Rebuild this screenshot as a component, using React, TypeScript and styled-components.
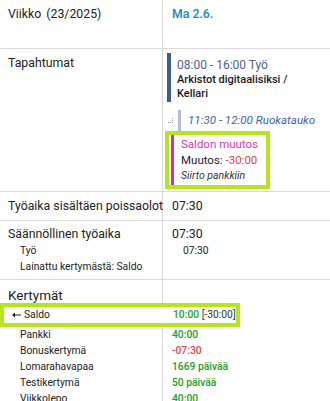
import styled, { createGlobalStyle } from "styled-components";

const GlobalStyle = createGlobalStyle`
  html, body {
    margin: 0;
    padding: 0;
    background: #fff;
    overflow: hidden;
  }
  body {
    font-family: Roboto, "Liberation Sans", sans-serif;
    font-size: 12.3px;
    color: #222;
  }
`;

const Table = styled.div`
  width: 330px;
  white-space: nowrap;
`;

const Row = styled.div<{ $h?: number }>`
  display: grid;
  grid-template-columns: 163px 1fr;
  border-bottom: 1px solid #d9d9d9;
  min-height: ${p => (p.$h ? `${p.$h}px` : "auto")};
`;

const LeftCell = styled.div<{ $pt?: number; $pb?: number }>`
  border-right: 1px solid #d9d9d9;
  padding: ${p => p.$pt ?? 6}px 0 ${p => p.$pb ?? 4}px 8px;
  line-height: 17px;
`;

const RightCell = styled.div<{ $pt?: number; $pl?: number }>`
  padding: ${p => p.$pt ?? 6}px 4px 0 ${p => p.$pl ?? 9}px;
  line-height: 17px;
`;

const WeekNo = styled.span`
  margin-left: 5px;
`;

const DayTitle = styled.span`
  color: #1a86c6;
  font-weight: 500;
`;

const Sub = styled.div<{ $indent?: number }>`
  font-size: 10.3px;
  line-height: 16px;
  padding-left: ${p => p.$indent ?? 12}px;
`;

const Events = styled.div`
  display: flex;
  flex-direction: column;
  align-items: flex-start;
  padding-top: 4px;
`;

const EventBox = styled.div<{ $bar: string }>`
  border-left: 4px solid ${p => p.$bar};
  padding: 4px 8px 1px 6px;
`;

const EventTime = styled.div`
  color: #51608e;
  font-size: 12px;
  line-height: 16px;
`;

const EventTitle = styled.div`
  font-size: 11px;
  font-weight: 500;
  line-height: 14px;
  color: #1a1a1a;
`;

const BreakRow = styled.div`
  display: flex;
  align-items: center;
  margin-top: 8px;
  height: 21px;
  padding-left: 1px;
`;

const BreakBar = styled.div`
  width: 3px;
  align-self: stretch;
  background: #b3bedb;
  margin: 0 7px 0 4px;
`;

const BreakText = styled.span`
  font-style: italic;
  font-size: 11.6px;
  color: #3f62a8;
`;

const Highlight = styled.div`
  border: 4px solid #b5e61d;
  background: #fff;
`;

const ChangeBox = styled(Highlight)`
  margin: 0 0 2px -2px;
  padding: 0 8px 0 2px;
`;

const ChangeInner = styled.div`
  border-left: 3px solid #c834b4;
  padding: 1px 0 1px 7px;
  font-size: 11.5px;
  line-height: 16px;
`;

const Magenta = styled.div`
  color: #d63cb4;
`;

const Red = styled.span`
  color: #e0474c;
`;

const Note = styled.div`
  font-style: italic;
  font-size: 10.5px;
  color: #333;
`;

const Section = styled.div`
  display: flex;
  flex-direction: column;
`;

const KHead = styled.div`
  display: grid;
  grid-template-columns: 163px 1fr;
`;

const KTitle = styled(LeftCell)`
  font-size: 13.5px;
  line-height: 16px;
`;

const KRow = styled.div`
  display: grid;
  grid-template-columns: 163px 1fr;
  font-size: 10.3px;
  line-height: 16px;
`;

const KLabel = styled.div`
  border-right: 1px solid #d9d9d9;
  padding-left: 20px;
`;

const KValue = styled.div<{ $color: string }>`
  padding-left: 9px;
  color: ${p => p.$color};
  font-weight: 500;
`;

const SaldoBox = styled(Highlight)`
  width: 232px;
  display: grid;
  grid-template-columns: 160px 1fr;
  font-size: 10.3px;
  line-height: 16px;
`;

const SaldoLabel = styled.div`
  display: flex;
  align-items: center;
  gap: 3px;
  padding-left: 8px;
`;

const Dark = styled.span`
  color: #333;
  font-weight: 400;
`;

const Grip = () => (
  <svg width="6" height="5" viewBox="0 0 6 5">
    <rect x="0" y="4" width="1" height="1" fill="#999" />
    <rect x="2" y="4" width="1" height="1" fill="#999" />
    <rect x="4" y="4" width="1" height="1" fill="#999" />
    <rect x="4" y="2" width="1" height="1" fill="#999" />
    <rect x="4" y="0" width="1" height="1" fill="#999" />
  </svg>
);

const Arrow = () => (
  <svg width="9" height="6" viewBox="0 0 9 6">
    <path d="M0 3 L3 0.5 L3 5.5 Z" fill="#222" />
    <rect x="2" y="2.5" width="7" height="1" fill="#222" />
  </svg>
);

const accruals = [
  { name: "Pankki", value: "40:00", color: "#22a022" },
  { name: "Bonuskertymä", value: "-07:30", color: "#e0474c" },
  { name: "Lomarahavapaa", value: "1669 päivää", color: "#22a022" },
  { name: "Testikertymä", value: "50 päivää", color: "#22a022" },
  { name: "Viikkolepo", value: "40:00", color: "#22a022" },
];

export default function App() {
  return (
    <>
      <GlobalStyle />
      <Table>
        <Row $h={48}>
          <LeftCell>
            Viikko<WeekNo>(23/2025)</WeekNo>
          </LeftCell>
          <RightCell>
            <DayTitle>Ma 2.6.</DayTitle>
          </RightCell>
        </Row>

        <Row>
          <LeftCell>Tapahtumat</LeftCell>
          <RightCell $pt={0} $pl={4}>
            <Events>
              <EventBox $bar="#3f5e92">
                <EventTime>08:00 - 16:00 Työ</EventTime>
                <EventTitle>Arkistot digitaalisiksi /</EventTitle>
                <EventTitle>Kellari</EventTitle>
              </EventBox>
              <BreakRow>
                <Grip />
                <BreakBar />
                <BreakText>11:30 - 12:00 Ruokatauko</BreakText>
              </BreakRow>
              <ChangeBox>
                <ChangeInner>
                  <Magenta>Saldon muutos</Magenta>
                  <div>
                    Muutos: <Red>-30:00</Red>
                  </div>
                  <Note>Siirto pankkiin</Note>
                </ChangeInner>
              </ChangeBox>
            </Events>
          </RightCell>
        </Row>

        <Row $h={28}>
          <LeftCell>Työaika sisältäen poissaolot</LeftCell>
          <RightCell>07:30</RightCell>
        </Row>

        <Row $h={55}>
          <LeftCell $pt={5}>
            Säännöllinen työaika
            <Sub>Työ</Sub>
            <Sub>Lainattu kertymästä: Saldo</Sub>
          </LeftCell>
          <RightCell $pt={5}>
            07:30
            <Sub $indent={11}>07:30</Sub>
          </RightCell>
        </Row>

        <Section>
          <KHead>
            <KTitle $pt={7} $pb={0}>Kertymät</KTitle>
            <div />
          </KHead>
          <SaldoBox>
            <SaldoLabel>
              <Arrow />
              Saldo
            </SaldoLabel>
            <KValue $color="#22a022">
              10:00 <Dark>[-30:00]</Dark>
            </KValue>
          </SaldoBox>
          {accruals.map(a => (
            <KRow key={a.name}>
              <KLabel>{a.name}</KLabel>
              <KValue $color={a.color}>{a.value}</KValue>
            </KRow>
          ))}
        </Section>
      </Table>
    </>
  );
}
